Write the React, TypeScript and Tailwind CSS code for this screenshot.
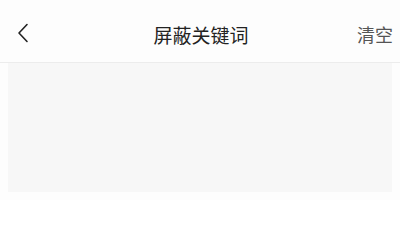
import React from 'react';

export default function App() {
  return (
    <div
      className="w-[400px] h-[200px] bg-[#fdfdfd] flex flex-col overflow-hidden"
      style={{ fontFamily: '"Noto Sans CJK SC", "Noto Sans", sans-serif' }}
    >
      {/* Header */}
      <div className="h-[63px] pt-[6px] flex items-center border-b border-[#ececec] shrink-0">
        <button className="w-[44px] h-full flex items-center justify-center pl-[2px] pb-[2px]">
          <svg width="12" height="20" viewBox="0 0 12 20" fill="none">
            <path d="M10 1.5 L2 10 L10 18.5" stroke="#222" strokeWidth="1.6" strokeLinecap="round" strokeLinejoin="round" />
          </svg>
        </button>
        <div className="flex-1 text-center text-[19px] text-[#222] leading-none pl-[2px]">屏蔽关键词</div>
        <button className="w-[44px] h-full flex items-center justify-end pr-[7px] text-[18px] text-[#555] leading-none">
          清空
        </button>
      </div>

      {/* Content */}
      <div className="px-2">
        <div className="h-[129px] bg-[#f7f7f7]" />
      </div>
    </div>
  );
}
